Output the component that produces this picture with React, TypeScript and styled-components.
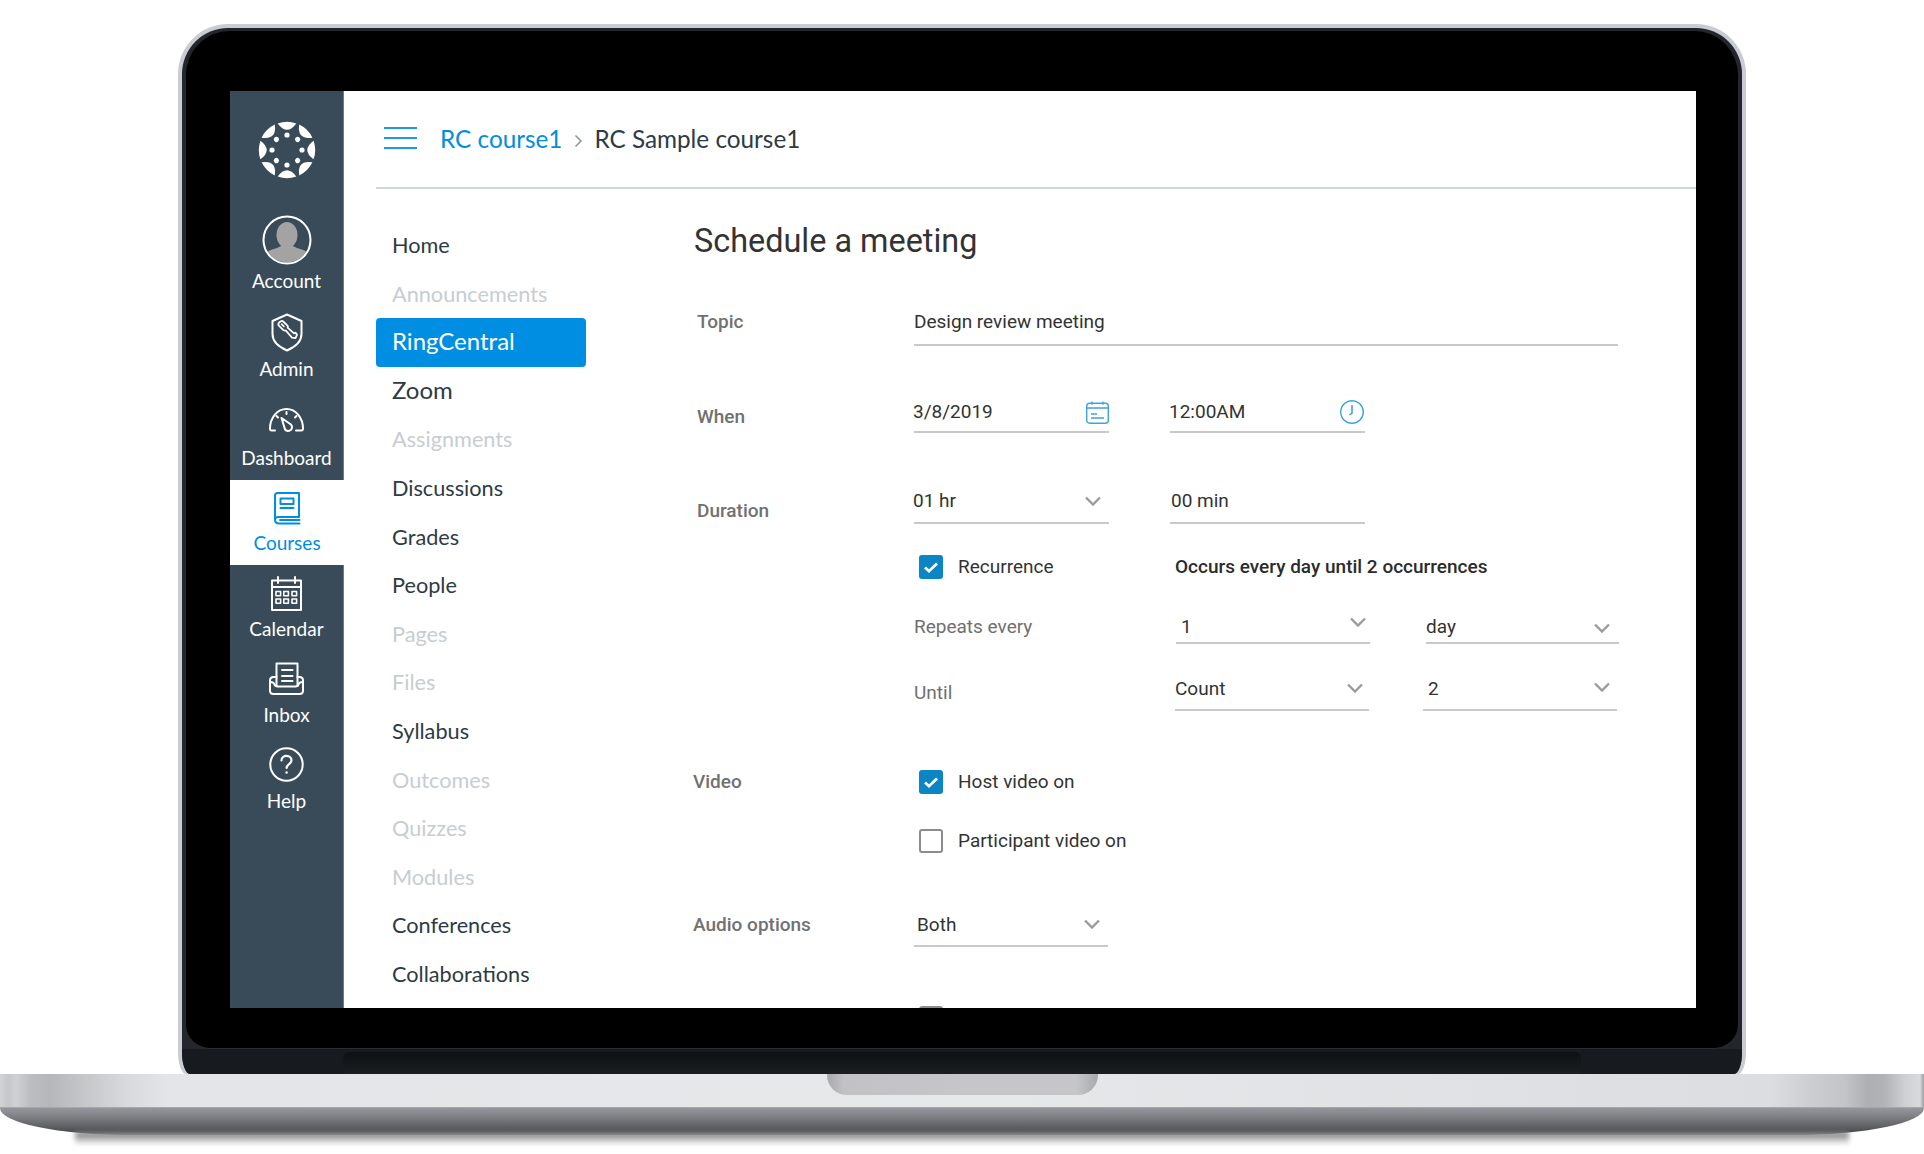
import React from 'react'
import styled, { createGlobalStyle } from 'styled-components'

const GlobalStyle = createGlobalStyle`
  html, body { margin: 0; padding: 0; background: #fff; }
  body { font-family: "Roboto", "Liberation Sans", sans-serif; }
  * { box-sizing: border-box; }
`

const Stage = styled.div`
  width: 1924px;
  height: 1154px;
  padding-top: 24px;
  background: #fff;
  overflow: hidden;
`

/* laptop shell */
const Lid = styled.div`
  margin: 0 178px;
  height: 1050px;
  padding: 4px 4px 0;
  background: #c9ccd2;
  border-radius: 50px 50px 8px 8px / 50px 50px 22px 22px;
`
const LidInner = styled.div`
  height: 100%;
  padding: 3px 4px 0;
  display: flex;
  flex-direction: column;
  background: #23272b;
  border-radius: 46px 46px 8px 8px / 46px 46px 22px 22px;
  overflow: hidden;
`
const Bezel = styled.div`
  height: 1018px;
  flex: none;
  padding: 60px 42px 41px 44px;
  background: #000;
  border-radius: 44px 44px 24px 24px;
  border-bottom: 1px solid #2a2e32;
`
const Chin = styled.div`
  flex: 1;
  display: flex;
  justify-content: center;
  background: #171b1f;
  margin: 0 -4px;
  padding-top: 3px;
`
const HingeStrip = styled.div`
  width: 1238px;
  background: linear-gradient(#0e1114, #1a1e22);
  border-radius: 6px 6px 0 0;
`
const Base = styled.div`
  width: 1924px;
  height: 34px;
  display: flex;
  justify-content: center;
  background: linear-gradient(
    90deg,
    #d3d4d6 0,
    #c6c7ca 8px,
    #d0d1d3 16px,
    #bcbdc0 30px,
    #b6b7ba 50px,
    #c8c9cb 90px,
    #d8d9dc 125px,
    #e4e5e8 170px,
    #e7e8ea 50%,
    #dcdde0 1770px,
    #cdced1 1810px,
    #c3c4c7 1845px,
    #aeafb2 1868px,
    #b2b3b6 1885px,
    #cfd0d3 1905px,
    #d9dadc 1920px,
    #a8a9ad 1923px
  );
  border-bottom: 1px solid #a6a7ab;
`
const Notch = styled.div`
  width: 271px;
  height: 21px;
  border-radius: 0 0 20px 20px;
  background: linear-gradient(90deg, #a8a9ab 0, #c2c2c4 6%, #c6c6c8 50%, #c6c6c8 92%, #a8a9ab 100%);
`
const BaseLip = styled.div`
  width: 1924px;
  height: 27px;
  background: linear-gradient(#95969b, #85868b 25%, #5e5f63 70%, #3e3f43);
  border-radius: 0 0 130px 130px / 0 0 27px 27px;
`
const FloorShadow = styled.div`
  margin: -3px 75px 0;
  height: 13px;
  background: linear-gradient(#6f7072, #bdbdbe 55%, #fff);
  filter: blur(2.5px);
`

/* screen */
const Screen = styled.div`
  height: 917px;
  display: flex;
  background: #fff;
  overflow: hidden;
`
const SideNav = styled.nav`
  width: 114px;
  flex: none;
  background: #394b59;
  border-right: 1px solid #6b7a85;
  display: flex;
  flex-direction: column;
`
const LogoBlock = styled.div`
  height: 109px;
  padding-top: 30px;
  display: flex;
  justify-content: center;
`
const NavItem = styled.div<{ $h: number; $gap: number; $active?: boolean }>`
  height: ${p => p.$h}px;
  padding-bottom: 12px;
  display: flex;
  flex-direction: column;
  align-items: center;
  justify-content: flex-end;
  gap: ${p => p.$gap}px;
  background: ${p => (p.$active ? '#fff' : 'transparent')};
  color: ${p => (p.$active ? '#008ee2' : '#fff')};
  margin-right: ${p => (p.$active ? '-1px' : '0')};
`
const NavLabel = styled.span`
  font-family: "Lato", sans-serif;
  font-size: 19px;
  line-height: 20px;
`
const NavIcon = styled.svg`
  display: block;
  flex: none;
  fill: none;
  stroke: currentColor;
  stroke-width: 2;
  stroke-linejoin: round;
  stroke-linecap: round;
`
const Main = styled.div`
  flex: 1;
  min-width: 0;
  display: flex;
  flex-direction: column;
`
const TopBar = styled.header`
  height: 98px;
  flex: none;
  margin-left: 32px;
  padding: 0 0 1px 8px;
  display: flex;
  align-items: center;
  border-bottom: 2px solid #d1d6da;
  font-family: "Lato", sans-serif;
  font-size: 24.3px;
`
const Burger = styled.div`
  width: 33px;
  height: 22px;
  margin: 0 23px 2px 0;
  display: flex;
  flex-direction: column;
  justify-content: space-between;
  & > i {
    display: block;
    height: 2px;
    background: #1b9ae6;
  }
`
const CrumbLink = styled.span`
  color: #008ee2;
`
const CrumbSep = styled.svg`
  width: 9px;
  height: 14px;
  margin: 4px 11px 0 12px;
  fill: none;
  stroke: #8a949b;
  stroke-width: 1.5;
`
const CrumbCurrent = styled.span`
  color: #2d3b45;
`
const Body = styled.div`
  flex: 1;
  display: flex;
  min-height: 0;
`
const CourseMenu = styled.ul`
  width: 210px;
  flex: none;
  margin: 0 0 0 32px;
  padding: 32px 0 0;
  list-style: none;
  font-family: "Lato", sans-serif;
  font-size: 21.7px;
`
const MenuItem = styled.li<{ $off?: boolean; $active?: boolean; $big?: boolean }>`
  height: 48.6px;
  line-height: ${p => (p.$big ? '46px' : '48px')};
  padding-left: 16px;
  border-radius: 4px;
  font-size: ${p => (p.$big ? '24px' : 'inherit')};
  color: ${p => (p.$active ? '#fff' : p.$off ? '#c7cdd1' : '#2d3b45')};
  background: ${p => (p.$active ? '#008ee2' : 'transparent')};
`
const FormArea = styled.div`
  flex: 1;
  margin-left: 107px;
`
const Title = styled.h1`
  margin: 0;
  height: 104px;
  line-height: 104px;
  padding-left: 1px;
  font-size: 32.4px;
  font-weight: 400;
  color: #333;
`
const Row = styled.div<{ $h: number }>`
  height: ${p => p.$h}px;
  display: grid;
  grid-template-columns: 221px 1fr;
  align-items: end;
`
const RowLabel = styled.div<{ $in?: number; $mb: number }>`
  padding-left: ${p => p.$in ?? 0}px;
  margin-bottom: ${p => p.$mb}px;
  font-size: 19px;
  line-height: 22px;
  font-weight: 500;
  color: #717171;
`
const Fields = styled.div<{ $gap?: number }>`
  display: flex;
  align-items: flex-end;
  gap: ${p => p.$gap ?? 61}px;
`
const Field = styled.div<{ $w?: number; $pb: number; $tx?: number; $ir?: number }>`
  width: ${p => (p.$w ? `${p.$w}px` : '100%')};
  height: 44px;
  flex: none;
  padding: 0 ${p => p.$ir ?? 0}px ${p => p.$pb}px 0;
  text-indent: ${p => p.$tx ?? 0}px;
  display: flex;
  align-items: flex-end;
  justify-content: space-between;
  border-bottom: 2px solid #c9c9c9;
  font-size: 19px;
  line-height: 22px;
  color: #333;
`
const Chevron = styled.svg<{ $lift?: number }>`
  width: 16px;
  height: 10px;
  flex: none;
  margin-bottom: ${p => p.$lift ?? 5}px;
  fill: none;
  stroke: #9b9b9b;
  stroke-width: 2.4;
`
const FieldIcon = styled.svg`
  flex: none;
  fill: none;
  stroke: #3fa3d9;
  stroke-width: 1.4;
  margin-bottom: -1px;
`
const SubLabel = styled.div<{ $w: number; $mb: number }>`
  width: ${p => p.$w}px;
  flex: none;
  margin-bottom: ${p => p.$mb}px;
  font-size: 19px;
  line-height: 22px;
  color: #6f6f6f;
`
const CheckLine = styled.div`
  padding-left: 5px;
  display: flex;
  align-items: center;
  font-size: 19px;
  line-height: 24px;
  color: #333;
`
const Box = styled.span<{ $on?: boolean }>`
  width: 24px;
  height: 24px;
  flex: none;
  margin-right: 15px;
  display: flex;
  align-items: center;
  justify-content: center;
  border-radius: 3px;
  background: ${p => (p.$on ? '#0b85c4' : '#fff')};
  border: ${p => (p.$on ? 'none' : '2.5px solid #8c8c8c')};
`
const CheckText = styled.span<{ $w?: number }>`
  width: ${p => (p.$w ? `${p.$w}px` : 'auto')};
`
const RecurNote = styled.span`
  font-weight: 500;
  color: #2b2b2b;
`
const PeekBox = styled.div`
  padding: 59px 0 0 226px;
`

const CanvasLogo = () => (
  <svg width="58" height="58" viewBox="-29 -29 58 58" fill="#fff">
    {[0, 45, 90, 135, 180, 225, 270, 315].map(a => (
      <g key={a} transform={`rotate(${a})`}>
        <path d="M-9.3 -26.6A28.3 28.3 0 0 1 9.3 -26.6Q0 -14 -9.3 -26.6Z" />
        <circle cx="0" cy="-15" r="2.6" />
      </g>
    ))}
  </svg>
)

const Avatar = () => (
  <svg width="50" height="50" viewBox="0 0 50 50">
    <defs>
      <clipPath id="avatarClip">
        <circle cx="25" cy="25" r="22.5" />
      </clipPath>
    </defs>
    <g clipPath="url(#avatarClip)" fill="#a3a3a3">
      <ellipse cx="25" cy="20" rx="10.5" ry="13" />
      <path d="M3 50V39Q6 35 15 33L21 30H29L35 33Q44 35 47 39V50Z" />
    </g>
    <circle cx="25" cy="25" r="23.5" fill="none" stroke="#fff" strokeWidth="2" />
  </svg>
)

const ShieldKey = () => (
  <NavIcon width="32" height="39" viewBox="0 0 32 39">
    <path d="M16 1.5 30.5 8V21C30.5 29 24 34 16 37.5 8 34 1.5 29 1.5 21V8Z" />
    <path d="M8 9.5 10 8.2C10.8 7.8 11.6 7.9 12.2 8.5L16.3 12.4C17 13 17.1 13.9 16.6 14.6L23 20.4 24.4 19.7 26 21.6 24.6 25 21 24.6 14.8 17.5C14 17.8 13.1 17.7 12.4 17.1L8.3 13.2C7.4 12.2 7.2 10.4 8 9.5Z" strokeWidth="1.8" />
    <path d="M10.6 11.2 13 13.5" strokeWidth="1.6" />
  </NavIcon>
)

const Gauge = () => (
  <NavIcon width="35" height="25" viewBox="0 0 35 25">
    <path d="M6 23.5H2.8C1.6 23.5 1 22.8 1 21.6 1 11 8 2 17.5 2S34 11 34 21.6C34 22.8 33.4 23.5 32.2 23.5H27" />
    <path d="M17.5 5V7M7.5 9 9 10.5M27.5 9 26 10.5" />
    <path d="M12.5 11 21.6 17.3C23.4 18.8 23.4 21.3 22 22.8 20.2 24.5 17.4 24.3 16 22.4Z" fill="none" />
  </NavIcon>
)

const Book = () => (
  <NavIcon width="27" height="33" viewBox="0 0 27 33">
    <path d="M3.5 1H25V25H4.5C2.5 25 1 26 1 27.5V3.5C1 2 2 1 3.5 1Z" />
    <path d="M1 27.5C1 30 2.5 31.5 5 31.5H25.5M6 28H25.5" />
    <path d="M6.5 6.5H19.5V12H6.5ZM6.5 16H19.5" />
  </NavIcon>
)

const CalendarNav = () => (
  <NavIcon width="31" height="35" viewBox="0 0 31 35">
    <path d="M1 4.5H30V34H1ZM1 11H30" />
    <path d="M7 1V7M24 1V7" />
    {[5, 12.8, 21].map(x =>
      [15.5, 23].map(y => <rect key={`${x}-${y}`} x={x} y={y} width="4.6" height="4.2" strokeWidth="1.6" />),
    )}
  </NavIcon>
)

const InboxNav = () => (
  <NavIcon width="35" height="33" viewBox="0 0 35 33">
    <path d="M7.5 24V1.5H28.5V24" />
    <path d="M13 8H23.5M13 14H23.5M13 19H23.5" />
    <path d="M7.5 15H4.5C2.5 15 1 16.5 1 18.5V28.5C1 30.5 2.5 32 4.5 32H30.5C32.5 32 34 30.5 34 28.5V18.5C34 16.5 32.5 15 30.5 15H28.5" />
    <path d="M1.5 20C4 20 5 21 5.5 22.5S7 24.5 8.5 24.5H26.5C28 24.5 29 24 29.5 22.5S31 20 33.5 20" />
  </NavIcon>
)

const HelpNav = () => (
  <NavIcon width="35" height="35" viewBox="0 0 35 35">
    <circle cx="17.5" cy="17.5" r="16.2" />
    <path d="M12.5 13.5C12.5 10.5 14.8 8.8 17.5 8.8S22.5 10.7 22.5 13.3C22.5 17 17.6 17.2 17.6 21" strokeWidth="2.2" />
    <circle cx="17.6" cy="25.5" r="1.2" fill="currentColor" stroke="none" />
  </NavIcon>
)

const Check = () => (
  <svg width="16" height="13" viewBox="0 0 16 13" fill="none" stroke="#fff" strokeWidth="2.8">
    <path d="M2 6.5 6 10.2 14 2.5" />
  </svg>
)

const ChevronDown = ({ lift }: { lift?: number }) => (
  <Chevron $lift={lift} viewBox="0 0 16 10">
    <path d="M1 1.5 8 8.5 15 1.5" />
  </Chevron>
)

const menu: { name: string; off?: boolean; active?: boolean; big?: boolean }[] = [
  { name: 'Home' },
  { name: 'Announcements', off: true },
  { name: 'RingCentral', active: true, big: true },
  { name: 'Zoom', big: true },
  { name: 'Assignments', off: true },
  { name: 'Discussions' },
  { name: 'Grades' },
  { name: 'People' },
  { name: 'Pages', off: true },
  { name: 'Files', off: true },
  { name: 'Syllabus' },
  { name: 'Outcomes', off: true },
  { name: 'Quizzes', off: true },
  { name: 'Modules', off: true },
  { name: 'Conferences' },
  { name: 'Collaborations' },
]

export default function App() {
  return (
    <Stage>
      <GlobalStyle />
      <Lid>
        <LidInner>
          <Bezel>
            <Screen>
              <SideNav>
                <LogoBlock>
                  <CanvasLogo />
                </LogoBlock>
                <NavItem $h={103} $gap={6}>
                  <Avatar />
                  <NavLabel>Account</NavLabel>
                </NavItem>
                <NavItem $h={88} $gap={7}>
                  <ShieldKey />
                  <NavLabel>Admin</NavLabel>
                </NavItem>
                <NavItem $h={89} $gap={16}>
                  <Gauge />
                  <NavLabel>Dashboard</NavLabel>
                </NavItem>
                <NavItem $h={85} $active $gap={8}>
                  <Book />
                  <NavLabel>Courses</NavLabel>
                </NavItem>
                <NavItem $h={86} $gap={8}>
                  <CalendarNav />
                  <NavLabel>Calendar</NavLabel>
                </NavItem>
                <NavItem $h={86} $gap={10}>
                  <InboxNav />
                  <NavLabel>Inbox</NavLabel>
                </NavItem>
                <NavItem $h={86} $gap={9}>
                  <HelpNav />
                  <NavLabel>Help</NavLabel>
                </NavItem>
              </SideNav>
              <Main>
                <TopBar>
                  <Burger>
                    <i />
                    <i />
                    <i />
                  </Burger>
                  <CrumbLink>RC course1</CrumbLink>
                  <CrumbSep viewBox="0 0 9 14">
                    <path d="M1.5 1.5 7 7 1.5 12.5" />
                  </CrumbSep>
                  <CrumbCurrent>RC Sample course1</CrumbCurrent>
                </TopBar>
                <Body>
                  <CourseMenu>
                    {menu.map(m => (
                      <MenuItem key={m.name} $off={m.off} $active={m.active} $big={m.big}>
                        {m.name}
                      </MenuItem>
                    ))}
                  </CourseMenu>
                  <FormArea>
                    <Title>Schedule a meeting</Title>
                    <Row $h={53}>
                      <RowLabel $in={4} $mb={13}>Topic</RowLabel>
                      <Fields>
                        <Field $w={704} $pb={11}>Design review meeting</Field>
                      </Fields>
                    </Row>
                    <Row $h={87}>
                      <RowLabel $in={4} $mb={5}>When</RowLabel>
                      <Fields>
                        <Field $w={195} $pb={8} $tx={-1}>
                          3/8/2019
                          <FieldIcon width="23" height="23" viewBox="0 0 23 23">
                            <rect x="0.7" y="2.2" width="21.6" height="20" rx="3" />
                            <path d="M0.7 7H22.3M6 0.5V3.8M17 0.5V3.8M5 13H11M5 17H18" />
                          </FieldIcon>
                        </Field>
                        <Field $w={195} $pb={8} $ir={1} $tx={-1}>
                          12:00AM
                          <FieldIcon width="24" height="24" viewBox="0 0 24 24">
                            <circle cx="12" cy="12" r="11.3" />
                            <path d="M12 5V13L9.5 15" strokeWidth="1.6" />
                          </FieldIcon>
                        </Field>
                      </Fields>
                    </Row>
                    <Row $h={91}>
                      <RowLabel $in={4} $mb={2}>Duration</RowLabel>
                      <Fields>
                        <Field $w={195} $pb={10} $ir={8} $tx={-1}>
                          01 hr
                          <ChevronDown lift={6} />
                        </Field>
                        <Field $w={195} $pb={10} $tx={1}>00 min</Field>
                      </Fields>
                    </Row>
                    <Row $h={55}>
                      <span />
                      <CheckLine>
                        <Box $on>
                          <Check />
                        </Box>
                        <CheckText $w={217}>Recurrence</CheckText>
                        <RecurNote>Occurs every day until 2 occurrences</RecurNote>
                      </CheckLine>
                    </Row>
                    <Row $h={65}>
                      <span />
                      <Fields $gap={56}>
                        <SubLabel $w={206} $mb={6}>Repeats every</SubLabel>
                        <Field $w={194} $pb={4} $tx={5} $ir={4}>
                          1
                          <ChevronDown lift={11} />
                        </Field>
                        <Field $w={193} $pb={4} $ir={9}>
                          day
                          <ChevronDown lift={5} />
                        </Field>
                      </Fields>
                    </Row>
                    <Row $h={67}>
                      <span />
                      <Fields $gap={54}>
                        <SubLabel $w={207} $mb={7}>Until</SubLabel>
                        <Field $w={194} $pb={9} $ir={6}>
                          Count
                          <ChevronDown lift={7} />
                        </Field>
                        <Field $w={194} $pb={9} $tx={5} $ir={7}>
                          2
                          <ChevronDown lift={8} />
                        </Field>
                      </Fields>
                    </Row>
                    <Row $h={83}>
                      <RowLabel $mb={1}>Video</RowLabel>
                      <CheckLine>
                        <Box $on>
                          <Check />
                        </Box>
                        Host video on
                      </CheckLine>
                    </Row>
                    <Row $h={59}>
                      <span />
                      <CheckLine>
                        <Box />
                        Participant video on
                      </CheckLine>
                    </Row>
                    <Row $h={94}>
                      <RowLabel $mb={11}>Audio options</RowLabel>
                      <Fields>
                        <Field $w={194} $pb={9} $tx={3} $ir={8}>
                          Both
                          <ChevronDown lift={7} />
                        </Field>
                      </Fields>
                    </Row>
                    <PeekBox>
                      <Box />
                    </PeekBox>
                  </FormArea>
                </Body>
              </Main>
            </Screen>
          </Bezel>
          <Chin>
            <HingeStrip />
          </Chin>
        </LidInner>
      </Lid>
      <Base>
        <Notch />
      </Base>
      <BaseLip />
      <FloorShadow />
    </Stage>
  )
}
